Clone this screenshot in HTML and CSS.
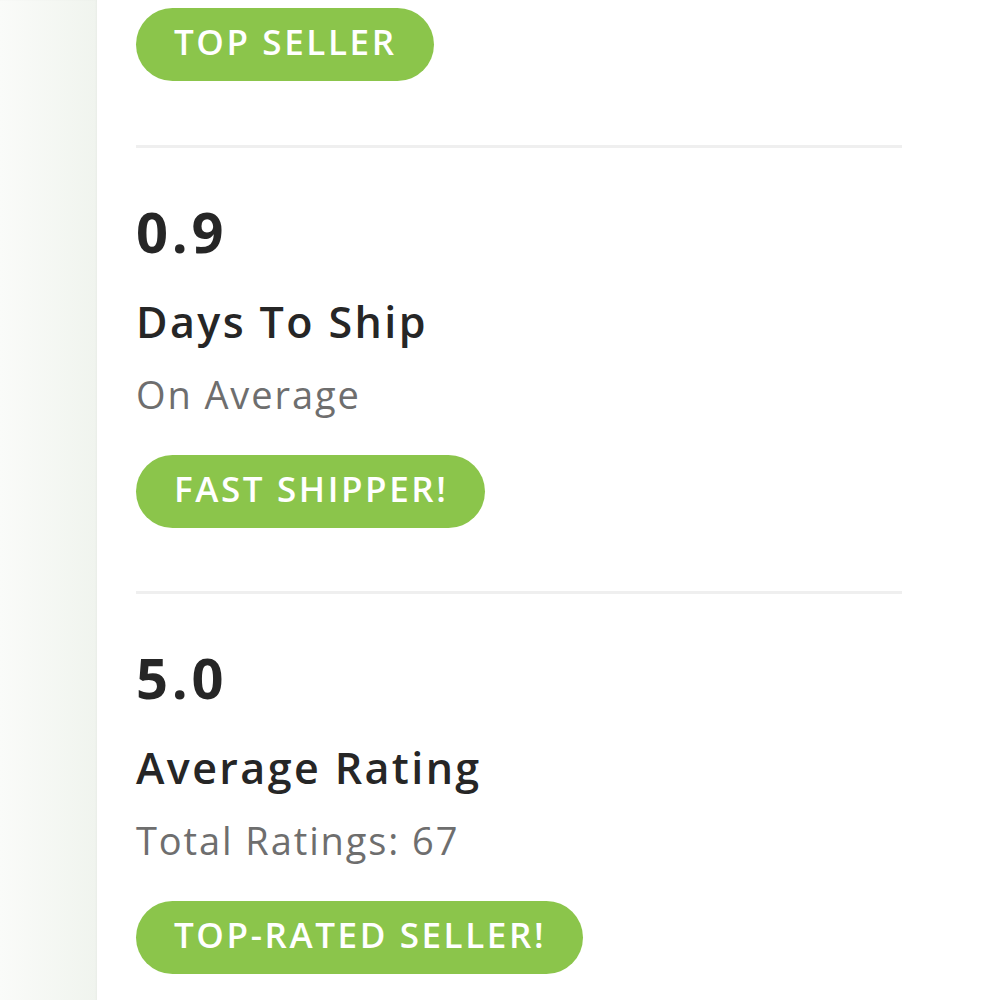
FILE: index.html
```html
<!DOCTYPE html>
<html lang="en">
<head>
    <meta charset="UTF-8">
    <meta name="viewport" content="width=device-width, initial-scale=1.0">
    <title>Seller Stats</title>
    <link rel="stylesheet" href="styles.css">
</head>
<body>
    <div class="page">
        <div class="sidebar"></div>

        <div class="main">
            <div class="stat first">
                <span class="badge">TOP SELLER</span>
            </div>

            <div class="stat">
                <div class="value">0.9</div>
                <div class="label">Days To Ship</div>
                <div class="sub">On Average</div>
                <span class="badge">FAST SHIPPER!</span>
            </div>

            <div class="stat last">
                <div class="value">5.0</div>
                <div class="label">Average Rating</div>
                <div class="sub">Total Ratings: 67</div>
                <span class="badge">TOP-RATED SELLER!</span>
            </div>
        </div>
    </div>
</body>
</html>
```

FILE: styles.css
```css
html, body {
    margin: 0;
    padding: 0;
    background-color: #ffffff;
}
body {
    font-family: "Open Sans", Lato, Arial, sans-serif;
    color: #262626;
}
.page {
    display: flex;
    min-height: 1000px;
}
.sidebar {
    width: 97px;
    flex-shrink: 0;
    background: linear-gradient(to right, #fafbf9, #f0f4ee);
    box-shadow: inset -1px 0 2px rgba(0, 0, 0, 0.03);
}
.main {
    flex: 1;
    padding-left: 39px;
}
.stat {
    width: 766px;
    padding: 55px 0 63px;
    border-bottom: 3px solid #efefef;
}
.stat.first {
    padding-top: 8px;
    padding-bottom: 64px;
}
.stat.last {
    border-bottom: none;
}
.value {
    font-size: 56px;
    line-height: 56px;
    font-weight: 700;
    letter-spacing: 3.7px;
}
.label {
    font-size: 43px;
    line-height: 43px;
    font-weight: 600;
    letter-spacing: 2.4px;
    margin-top: 41px;
}
.sub {
    font-size: 38px;
    line-height: 38px;
    color: #6e6e6e;
    letter-spacing: 1.9px;
    margin-top: 32px;
}
.sub + .badge {
    margin-top: 42px;
}
.badge {
    display: inline-block;
    box-sizing: border-box;
    height: 73px;
    line-height: 67px;
    padding: 0 37px 6px 38px;
    border-radius: 37px;
    background-color: #8bc54b;
    color: #ffffff;
    font-size: 35px;
    font-weight: 600;
    letter-spacing: 2.6px;
}
```
